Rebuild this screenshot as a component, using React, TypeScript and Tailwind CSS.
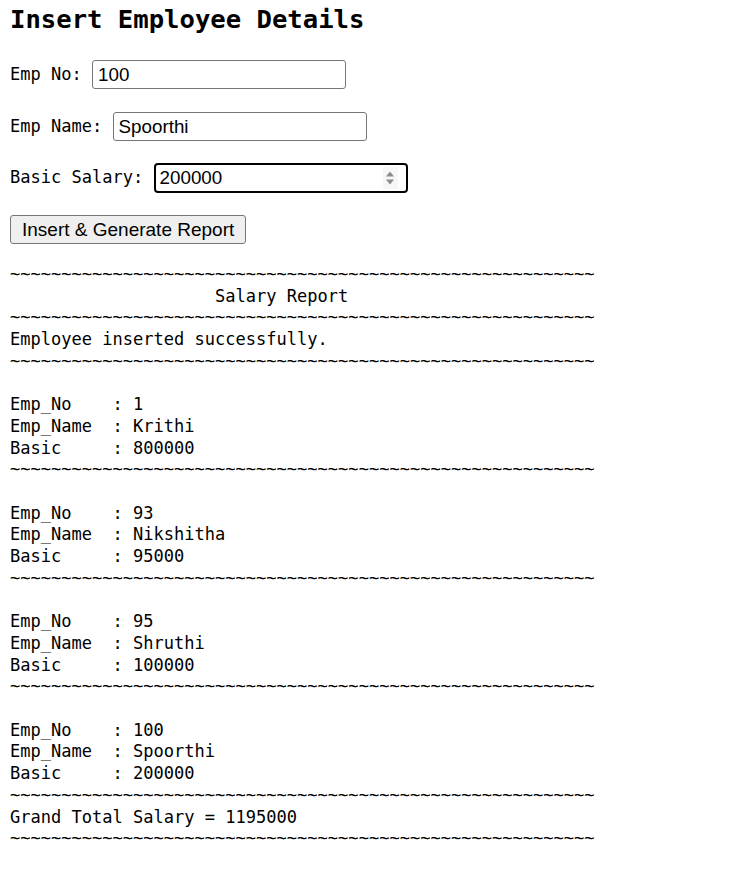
import React from "react";

const TILDES = "~".repeat(57);

const records = [
  { no: "1", name: "Krithi", basic: "800000" },
  { no: "93", name: "Nikshitha", basic: "95000" },
  { no: "95", name: "Shruthi", basic: "100000" },
  { no: "100", name: "Spoorthi", basic: "200000" },
];

function buildReport() {
  const lines: string[] = [];
  lines.push(TILDES);
  lines.push(" ".repeat(20) + "Salary Report");
  lines.push(TILDES);
  lines.push("Employee inserted successfully.");
  lines.push(TILDES);
  records.forEach((r) => {
    lines.push("");
    lines.push("Emp_No    : " + r.no);
    lines.push("Emp_Name  : " + r.name);
    lines.push("Basic     : " + r.basic);
    lines.push(TILDES);
  });
  lines.push("Grand Total Salary = 1195000");
  lines.push(TILDES);
  return lines.join("\n");
}

function Field({ label, value, className }: { label: string; value: string; className?: string }) {
  return (
    <div className={"flex h-[29px] items-center " + (className ?? "")}>
      <span className="whitespace-pre">{label} </span>
      <input
        readOnly
        value={value}
        className="h-[29px] w-[254px] rounded-[3px] border border-[#767676] bg-white px-[5px] font-['Liberation_Sans',Arial,sans-serif] text-[18.8px] text-black outline-none"
      />
    </div>
  );
}

export default function App() {
  return (
    <div className="min-h-screen bg-white px-[10px] pt-[3px] text-black">
      <h1 className="font-['DejaVu_Sans_Mono',monospace] text-[25.6px] font-bold leading-[32px]">
        Insert Employee Details
      </h1>

      {/* form rows */}
      <div className="mt-[25px] flex flex-col items-start font-['DejaVu_Sans_Mono',monospace] text-[17.05px]">
        <Field label="Emp No:" value="100" />
        <Field label="Emp Name:" value="Spoorthi" className="mt-[23px]" />
        <div className="mt-[22px] flex h-[30px] items-center">
          <span className="whitespace-pre">Basic Salary: </span>
          <div className="flex h-[30px] w-[254px] items-stretch rounded-[4px] border-2 border-black bg-white">
            <input
              readOnly
              value="200000"
              className="min-w-0 flex-1 bg-transparent px-[4px] font-['Liberation_Sans',Arial,sans-serif] text-[18.8px] text-black outline-none"
            />
            <div className="my-[2px] mr-[8px] flex w-[15px] items-center justify-center bg-[#f7f7f7]">
              <svg width="10" height="16" viewBox="0 0 10 16">
                <path d="M5 1.5 L9 6.5 L1 6.5 Z" fill="#8c8c8c" />
                <path d="M1 9.5 L9 9.5 L5 14.5 Z" fill="#8c8c8c" />
              </svg>
            </div>
          </div>
        </div>
        <button className="mt-[22px] h-[29px] rounded-[3px] border border-[#767676] bg-[#efefef] px-[11px] font-['Liberation_Sans',Arial,sans-serif] text-[19px] text-black">
          Insert &amp; Generate Report
        </button>
      </div>

      <pre className="mt-[20px] font-['DejaVu_Sans_Mono',monospace] text-[17.05px] leading-[21.7px] text-black">
        {buildReport()}
      </pre>
    </div>
  );
}
